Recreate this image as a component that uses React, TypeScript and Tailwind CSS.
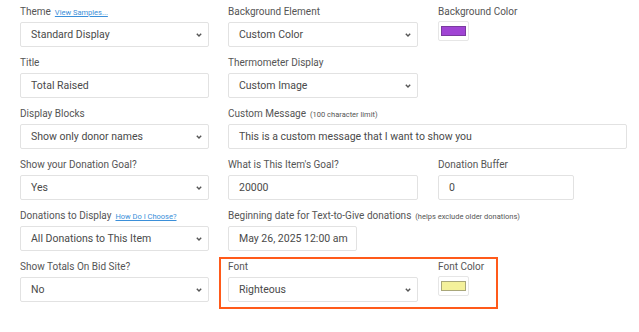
import React from "react"

const Chevron = () => (
  <svg width="6" height="4" viewBox="0 0 6 4" className="text-[#555]">
    <path d="M0.8 0.8 L3 3 L5.2 0.8" fill="none" stroke="currentColor" strokeWidth="1.4" />
  </svg>
)

function Label({ text, extra, link }: { text: string; extra?: string; link?: string }) {
  return (
    <div className="h-[14px] leading-[14px] text-[10px] text-[#555] whitespace-nowrap">
      {text}
      {extra && <span className="text-[7.5px] ml-1">{extra}</span>}
      {link && <a className="text-[7.5px] ml-1 text-[#3b8fd9] underline">{link}</a>}
    </div>
  )
}

function Select({ value, w = "w-[189px]" }: { value: string; w?: string }) {
  return (
    <div className={`${w} h-[25px] mt-[3px] border border-[#e2e2e2] rounded-[2px] bg-white flex items-center justify-between pl-[10px] pr-[6px] text-[10.5px] text-[#4a4a4a]`}>
      <span>{value}</span>
      <Chevron />
    </div>
  )
}

function Input({ value, w = "w-[189px]" }: { value: string; w?: string }) {
  return (
    <div className={`${w} h-[25px] mt-[3px] border border-[#e2e2e2] rounded-[2px] bg-white flex items-center pl-[10px] text-[10.5px] text-[#4a4a4a]`}>
      {value}
    </div>
  )
}

function Swatch({ color, border }: { color: string; border: string }) {
  return (
    <div className="w-[31px] h-[20px] mt-[2px] border border-[#e6e6e6] rounded-[2px] flex items-center justify-center">
      <div className="w-[25px] h-[10px] border" style={{ background: color, borderColor: border }} />
    </div>
  )
}

export default function App() {
  return (
    <div className="w-[639px] h-[332px] bg-white pt-[5px] pl-[20px] font-['Roboto',sans-serif] flex flex-col gap-[9px]">
      <div className="flex gap-[19px]">
        <div>
          <Label text="Theme" link="View Samples..." />
          <Select value="Standard Display" />
        </div>
        <div>
          <Label text="Background Element" />
          <Select value="Custom Color" w="w-[190px]" />
        </div>
        <div className="ml-px">
          <Label text="Background Color" />
          <Swatch color="#a044d4" border="#7a3aa0" />
        </div>
      </div>

      <div className="flex gap-[19px]">
        <div>
          <Label text="Title" />
          <Input value="Total Raised" />
        </div>
        <div>
          <Label text="Thermometer Display" />
          <Select value="Custom Image" w="w-[190px]" />
        </div>
      </div>

      <div className="flex gap-[19px]">
        <div>
          <Label text="Display Blocks" />
          <Select value="Show only donor names" />
        </div>
        <div>
          <Label text="Custom Message" extra="(100 character limit)" />
          <Input value="This is a custom message that I want to show you" w="w-[399px]" />
        </div>
      </div>

      <div className="flex gap-[19px]">
        <div>
          <Label text="Show your Donation Goal?" />
          <Select value="Yes" />
        </div>
        <div>
          <Label text="What is This Item's Goal?" />
          <Input value="20000" w="w-[190px]" />
        </div>
        <div className="ml-px">
          <Label text="Donation Buffer" />
          <Input value="0" w="w-[136px]" />
        </div>
      </div>

      <div className="flex gap-[19px]">
        <div>
          <Label text="Donations to Display" link="How Do I Choose?" />
          <Select value="All Donations to This Item" />
        </div>
        <div>
          <Label text="Beginning date for Text-to-Give donations" extra="(helps exclude older donations)" />
          <Input value="May 26, 2025 12:00 am" w="w-[129px]" />
        </div>
      </div>

      <div className="flex gap-[19px]">
        <div>
          <Label text="Show Totals On Bid Site?" />
          <Select value="No" />
        </div>
        <div className="relative flex gap-[20px]">
          <div className="absolute left-[-9px] top-[-3px] w-[279px] h-[52px] border-2 border-[#ff5a1a] pointer-events-none" />
          <div>
            <Label text="Font" />
            <Select value="Righteous" w="w-[190px]" />
          </div>
          <div>
            <Label text="Font Color" />
            <Swatch color="#f4f19b" border="#a9a77a" />
          </div>
        </div>
      </div>
    </div>
  )
}
